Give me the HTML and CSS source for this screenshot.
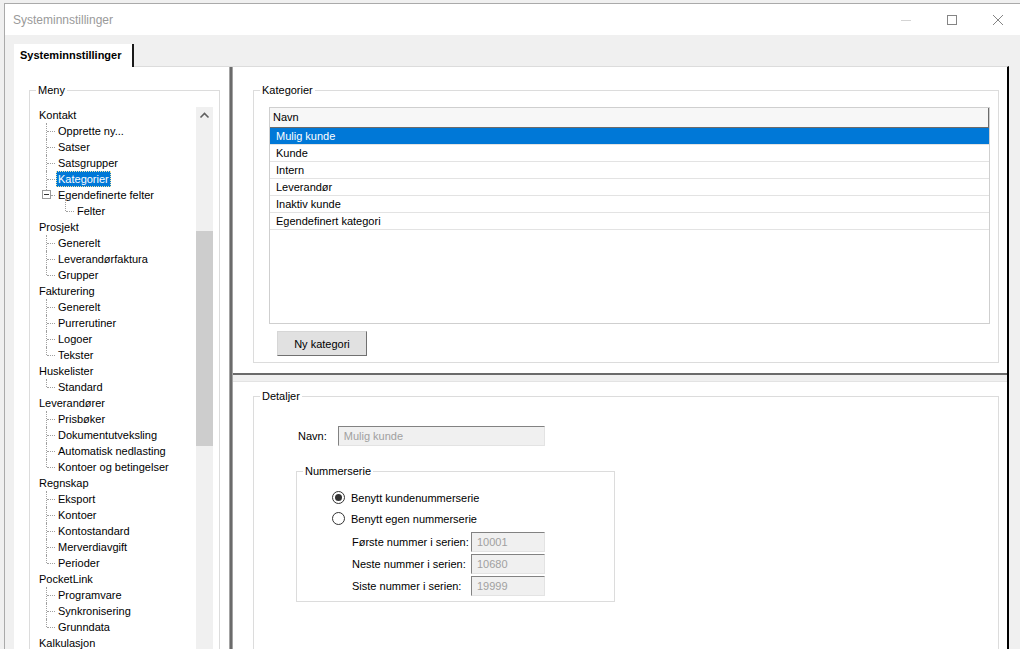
FILE: index.html
```html
<!DOCTYPE html>
<html lang="no">
<head>
    <meta charset="UTF-8">
    <title>Systeminnstillinger</title>
    <link rel="stylesheet" href="styles.css">
</head>
<body>
    <div class="window">
        <div class="titlebar">
            <div class="title">Systeminnstillinger</div>
            <div class="caption-btn">
                <svg width="10" height="10" viewBox="0 0 10 10"><line x1="0" y1="5.5" x2="10" y2="5.5" stroke="#d4d4d4"/></svg>
            </div>
            <div class="caption-btn">
                <svg width="10" height="10" viewBox="0 0 10 10"><rect x="0.5" y="0.5" width="9" height="9" fill="none" stroke="#858585"/></svg>
            </div>
            <div class="caption-btn">
                <svg width="10" height="10" viewBox="0 0 10 10"><path d="M0 0 L10 10 M10 0 L0 10" stroke="#858585" stroke-width="1"/></svg>
            </div>
        </div>

        <div class="client">
            <div class="tabs">
                <div class="tab">Systeminnstillinger</div>
            </div>

            <div class="tabpage">
                <!-- left menu -->
                <div class="nav">
                    <fieldset class="group menu">
                        <legend>Meny</legend>
                        <div class="tree">
                            <div class="tree-items">
                                <div class="node"><span class="label">Kontakt</span></div>
                                <div class="node child"><span class="label">Opprette ny...</span></div>
                                <div class="node child"><span class="label">Satser</span></div>
                                <div class="node child"><span class="label">Satsgrupper</span></div>
                                <div class="node child sel"><span class="label">Kategorier</span></div>
                                <div class="node child last toggled"><span class="toggle"></span><span class="label">Egendefinerte felter</span></div>
                                <div class="node grandchild last"><span class="label">Felter</span></div>
                                <div class="node"><span class="label">Prosjekt</span></div>
                                <div class="node child"><span class="label">Generelt</span></div>
                                <div class="node child"><span class="label">Leverandørfaktura</span></div>
                                <div class="node child last"><span class="label">Grupper</span></div>
                                <div class="node"><span class="label">Fakturering</span></div>
                                <div class="node child"><span class="label">Generelt</span></div>
                                <div class="node child"><span class="label">Purrerutiner</span></div>
                                <div class="node child"><span class="label">Logoer</span></div>
                                <div class="node child last"><span class="label">Tekster</span></div>
                                <div class="node"><span class="label">Huskelister</span></div>
                                <div class="node child last"><span class="label">Standard</span></div>
                                <div class="node"><span class="label">Leverandører</span></div>
                                <div class="node child"><span class="label">Prisbøker</span></div>
                                <div class="node child"><span class="label">Dokumentutveksling</span></div>
                                <div class="node child"><span class="label">Automatisk nedlasting</span></div>
                                <div class="node child last"><span class="label">Kontoer og betingelser</span></div>
                                <div class="node"><span class="label">Regnskap</span></div>
                                <div class="node child"><span class="label">Eksport</span></div>
                                <div class="node child"><span class="label">Kontoer</span></div>
                                <div class="node child"><span class="label">Kontostandard</span></div>
                                <div class="node child"><span class="label">Merverdiavgift</span></div>
                                <div class="node child last"><span class="label">Perioder</span></div>
                                <div class="node"><span class="label">PocketLink</span></div>
                                <div class="node child"><span class="label">Programvare</span></div>
                                <div class="node child"><span class="label">Synkronisering</span></div>
                                <div class="node child last"><span class="label">Grunndata</span></div>
                                <div class="node"><span class="label">Kalkulasjon</span></div>
                            </div>
                            <div class="scrollbar">
                                <div class="scroll-arrow">
                                    <svg width="17" height="17" viewBox="0 0 17 17"><polyline points="4.5,10.5 8.5,6.5 12.5,10.5" fill="none" stroke="#606060" stroke-width="1.6"/></svg>
                                </div>
                                <div class="scroll-thumb"></div>
                            </div>
                        </div>
                    </fieldset>
                </div>

                <div class="vsplit"></div>

                <!-- right side -->
                <div class="content">
                    <div class="upper">
                        <fieldset class="group categories">
                            <legend>Kategorier</legend>
                            <div class="listview">
                                <div class="list-head">Navn</div>
                                <div class="row sel">Mulig kunde</div>
                                <div class="row">Kunde</div>
                                <div class="row">Intern</div>
                                <div class="row">Leverandør</div>
                                <div class="row">Inaktiv kunde</div>
                                <div class="row">Egendefinert kategori</div>
                            </div>
                            <button class="btn">Ny kategori</button>
                        </fieldset>
                    </div>

                    <div class="hsplit"></div>

                    <div class="lower">
                        <fieldset class="group details">
                            <legend>Detaljer</legend>
                            <div class="field-row">
                                <span>Navn:</span>
                                <input class="textbox name" type="text" value="Mulig kunde" disabled>
                            </div>

                            <fieldset class="group series">
                                <legend>Nummerserie</legend>
                                <div class="radio"><span class="dot on"></span>Benytt kundenummerserie</div>
                                <div class="radio"><span class="dot"></span>Benytt egen nummerserie</div>
                                <div class="numbers">
                                    <span>Første nummer i serien:</span>
                                    <input class="textbox" type="text" value="10001" disabled>
                                    <span>Neste nummer i serien:</span>
                                    <input class="textbox" type="text" value="10680" disabled>
                                    <span>Siste nummer i serien:</span>
                                    <input class="textbox" type="text" value="19999" disabled>
                                </div>
                            </fieldset>
                        </fieldset>
                    </div>
                </div>
            </div>
        </div>
    </div>
</body>
</html>
```

FILE: styles.css
```css
body {
    margin: 0;
    height: 649px;
    overflow: hidden;
    background: #f0f0f0;
    font-family: "Liberation Sans", Arial, sans-serif;
    font-size: 11px;
    color: #000;
}

.window {
    margin: 3px 0 0 4px;
    width: 1017px;
    height: 700px;
    box-sizing: border-box;
    border-left: 1px solid #aaaaaa;
    border-top: 1px solid #aaaaaa;
    background: #f0f0f0;
}

.titlebar {
    height: 31px;
    background: #fff;
    display: flex;
    align-items: center;
    padding-left: 8px;
}

.title {
    flex: 1;
    font-size: 12px;
    color: #9a9a9a;
}

.caption-btn {
    width: 46px;
    height: 31px;
    display: flex;
    align-items: center;
    justify-content: center;
}

.client {
    padding: 9px 0 0 9px;
}

.tabs {
    display: flex;
    height: 22px;
}

.tab {
    position: relative;
    width: 120px;
    height: 23px;
    box-sizing: border-box;
    padding-left: 6px;
    line-height: 22px;
    background: #fff;
    font-weight: bold;
    border-right: 2px solid #1a1a1a;
}

.tabpage {
    display: flex;
    width: 995px;
    height: 600px;
    box-sizing: border-box;
    background: #fff;
    border-top: 1px solid #dcdcdc;
    border-right: 2px solid #000;
}

/* group boxes */
.group {
    margin: 0;
    padding: 0;
    min-width: 0;
    border: 1px solid #dcdcdc;
}

.group > legend {
    margin-left: 6px;
    padding: 0 2px;
    line-height: 14px;
}

/* left menu */
.nav {
    width: 215px;
    flex: none;
    box-sizing: border-box;
    padding: 16px 9px 0 15px;
}

.menu {
    height: 600px;
    padding: 10px 6px 0 0;
}

.tree {
    display: flex;
    height: 560px;
}

.tree-items {
    flex: 1;
    padding-left: 7px;
}

.node {
    position: relative;
    height: 16px;
    line-height: 16px;
    white-space: nowrap;
}

.node .label {
    display: inline-block;
    padding: 0 2px;
    height: 16px;
}

.node.child {
    margin-left: 19px;
}

.node.grandchild {
    margin-left: 38px;
}

.node.child::before,
.node.grandchild::before {
    content: "";
    position: absolute;
    left: -10px;
    top: 0;
    height: 16px;
    border-left: 1px dotted #a0a0a0;
}

.node.child::after,
.node.grandchild::after {
    content: "";
    position: absolute;
    left: -9px;
    top: 8px;
    width: 8px;
    border-top: 1px dotted #a0a0a0;
}

.node.last::before {
    height: 8px;
}

.node.toggled::before {
    height: 3px;
}

.node.toggled::after {
    left: -5px;
    width: 4px;
}

.node.grandchild::before {
    top: -4px;
    height: 12px;
}

.toggle {
    position: absolute;
    left: -14px;
    top: 3px;
    width: 9px;
    height: 9px;
    box-sizing: border-box;
    border: 1px solid #9a9a9a;
    background: #fff;
}

.toggle::after {
    content: "";
    position: absolute;
    left: 1px;
    top: 3px;
    width: 5px;
    height: 1px;
    background: #333;
}

.node.sel .label {
    background: #0078d7;
    color: #fff;
    outline: 1px dotted #f3e6a6;
    outline-offset: -1px;
}

.scrollbar {
    width: 17px;
    flex: none;
    background: #f0f0f0;
}

.scroll-arrow {
    height: 17px;
}

.scroll-thumb {
    margin-top: 107px;
    height: 215px;
    background: #cdcdcd;
}

.vsplit {
    width: 4px;
    flex: none;
    background: linear-gradient(to right, #a4a4a4 0 1px, #6b6b6b 1px 3px, #a4a4a4 3px);
}

/* right side */
.content {
    flex: 1;
    display: flex;
    flex-direction: column;
    overflow: hidden;
}

.upper {
    flex: none;
    height: 306px;
    box-sizing: border-box;
    padding: 16px 8px 0 20px;
}

.categories {
    padding: 10px 8px 6px 0;
}

.listview {
    height: 217px;
    margin-left: 15px;
    box-sizing: border-box;
    border: 1px solid #cfcfcf;
}

.list-head {
    height: 20px;
    box-sizing: border-box;
    padding-left: 3px;
    line-height: 19px;
    background: #f7f7f7;
    border-bottom: 1px solid #6b6b6b;
    border-right: 1px solid #6b6b6b;
}

.row {
    height: 17px;
    box-sizing: border-box;
    padding-left: 6px;
    line-height: 16px;
    border-bottom: 1px solid #e3e3e3;
}

.row.sel {
    background: #0078d7;
    color: #fff;
}

.btn {
    display: block;
    margin: 7px 0 0 23px;
    width: 90px;
    height: 25px;
    padding: 0;
    font: inherit;
    color: #000;
    background: #e1e1e1;
    border: 1px solid;
    border-color: #d6d6d6 #707070 #707070 #d6d6d6;
}

.hsplit {
    height: 9px;
    flex: none;
    box-sizing: border-box;
    border-top: 2px solid #6b6b6b;
    border-bottom: 1px solid #e3e3e3;
    background: #f0f0f0;
}

.lower {
    flex: none;
    padding: 7px 8px 0 20px;
}

.details {
    height: 300px;
    padding-top: 23px;
}

.field-row {
    display: flex;
    align-items: center;
    gap: 11px;
    margin-left: 44px;
}

.textbox {
    width: 74px;
    height: 20px;
    box-sizing: border-box;
    margin: 0;
    padding: 0 0 0 5px;
    font: inherit;
    color: #a0a0a0;
    background: #f0f0f0;
    border: 1px solid;
    border-color: #828282 #e3e3e3 #e3e3e3 #828282;
}

.textbox.name {
    width: 207px;
}

.series {
    margin: 18px 0 0 42px;
    width: 317px;
    padding: 9px 0 5px 0;
}

.radio {
    display: flex;
    align-items: center;
    gap: 6px;
    height: 21px;
    padding-left: 35px;
}

.dot {
    width: 13px;
    height: 13px;
    box-sizing: border-box;
    border: 1px solid #333;
    border-radius: 50%;
    background: #fff;
    display: flex;
    align-items: center;
    justify-content: center;
}

.dot.on::after {
    content: "";
    width: 7px;
    height: 7px;
    border-radius: 50%;
    background: #333;
}

.numbers {
    display: grid;
    grid-template-columns: 119px 74px;
    row-gap: 2px;
    align-items: center;
    margin-top: 3px;
    padding-left: 55px;
}
```
